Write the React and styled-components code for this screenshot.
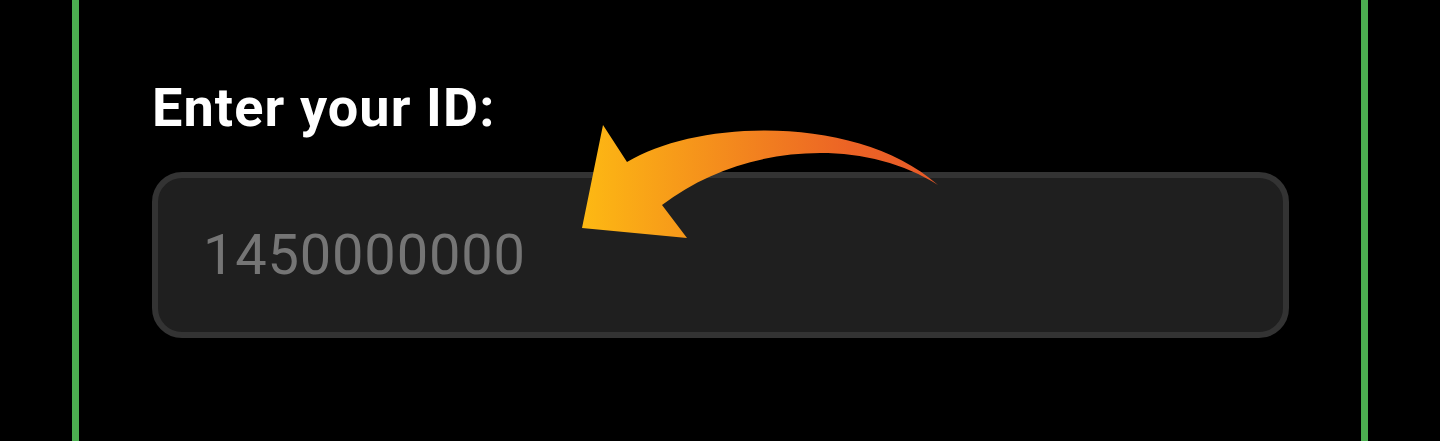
import React from "react";
import styled, { createGlobalStyle } from "styled-components";

const Global = createGlobalStyle`
  html, body { margin: 0; padding: 0; background: #000; }
  body { font-family: Roboto, "Noto Sans", sans-serif; }
`;

const Frame = styled.div`
  box-sizing: border-box;
  margin-left: 72px;
  width: 1296px;
  height: 441px;
  border-left: 7px solid #4caf50;
  border-right: 7px solid #4caf50;
  padding: 77px 72px 0 73px;
  display: flex;
  flex-direction: column;
  gap: 34px;
  position: relative;
`;

const Label = styled.label`
  font-family: Roboto, sans-serif;
  font-weight: 700;
  font-size: 54px;
  line-height: 61px;
  letter-spacing: 1.1px;
  color: #fff;
`;

const Field = styled.input`
  box-sizing: border-box;
  width: 100%;
  height: 166px;
  background: #1f1f1f;
  border: 6px solid #333;
  border-radius: 30px;
  padding: 0 45px;
  font-family: Roboto, sans-serif;
  font-size: 56px;
  letter-spacing: 0.8px;
  color: #fff;
  outline: none;
  &::placeholder { color: #757575; }
`;

const Arrow = styled.svg`
  position: absolute;
  left: -79px;
  top: 0;
  pointer-events: none;
`;

export default function App() {
  return (
    <>
      <Global />
      <Frame>
        <Label htmlFor="id">Enter your ID:</Label>
        <Field id="id" placeholder="1450000000" />
        <Arrow width="1440" height="441" viewBox="0 0 1440 441">
          <defs>
            <linearGradient id="g" x1="582" y1="0" x2="938" y2="0" gradientUnits="userSpaceOnUse">
              <stop offset="0" stopColor="#fdb913" />
              <stop offset="0.75" stopColor="#ec6325" />
              <stop offset="1" stopColor="#e85a28" />
            </linearGradient>
          </defs>
          <path
            d="M582,228 L603,125 L627,162 C700,118 860,115 938,185 C860,135 740,145 662,205 L687,238 Z"
            fill="url(#g)"
          />
        </Arrow>
      </Frame>
    </>
  );
}
